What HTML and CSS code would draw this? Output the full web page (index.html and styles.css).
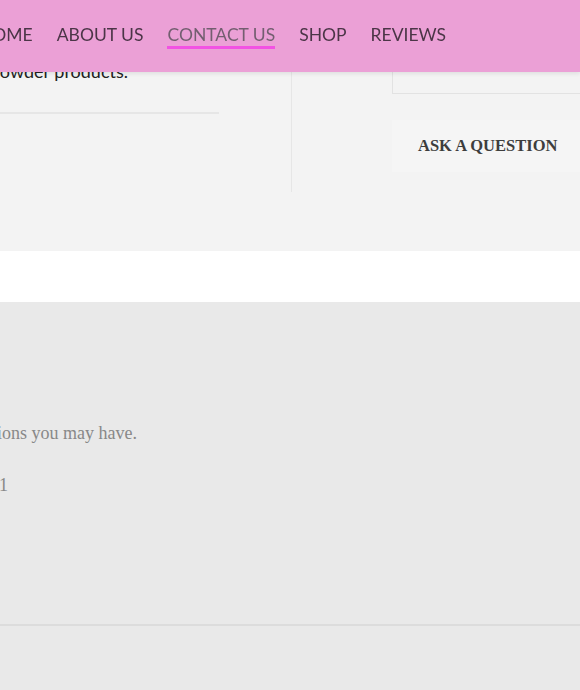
FILE: index.html
```html
<!DOCTYPE html>
<html lang="en">
<head>
    <meta charset="UTF-8">
    <meta name="viewport" content="width=device-width, initial-scale=1.0">
    <title>Contact Us</title>
    <link rel="stylesheet" href="styles.css">
</head>
<body>
    <!-- Barra de navegacion fija -->
    <header class="site-header">
        <ul class="nav">
            <li><a href="#">HOME</a></li>
            <li><a href="#">ABOUT US</a></li>
            <li><a href="#" class="active">CONTACT US</a></li>
            <li><a href="#">SHOP</a></li>
            <li><a href="#">REVIEWS</a></li>
        </ul>
    </header>

    <!-- Seccion de contacto -->
    <section class="contact">
        <div class="contact-grid">
            <div class="contact-info">
                <div class="clip-right intro-wrap">
                    <p class="intro">Get in touch with us about our powder products.</p>
                </div>
                <div class="divider"></div>
            </div>
            <div class="contact-form">
                <div class="field-box"></div>
                <button class="ask-btn">ASK A QUESTION</button>
            </div>
        </div>
    </section>

    <div class="spacer"></div>

    <!-- Pie de pagina -->
    <section class="footer">
        <div class="clip-right note-wrap">
            <p class="note">Feel free to reach out with any questions you may have.</p>
        </div>
        <div class="clip-right phone-wrap">
            <p class="note">Phone: (555) 010-0101</p>
        </div>
        <div class="footer-line"></div>
    </section>
</body>
</html>
```

FILE: styles.css
```css
/* Estilos generales */
body {
    margin: 0;
    padding: 0;
    background-color: #fff;
    color: #333;
    font-family: Lato, "Open Sans", sans-serif;
}

/* Cabecera */
.site-header {
    position: fixed;
    top: 0;
    left: 0;
    right: 0;
    height: 72px;
    background-color: #eba0d6;
    box-shadow: 0 2px 4px rgba(0, 0, 0, 0.08);
    z-index: 10;
}

.nav {
    list-style: none;
    margin: 0 0 0 -21px;
    padding: 25px 0 0;
    display: flex;
    gap: 24px;
}

.nav a {
    display: block;
    padding: 0 0 1px;
    font-size: 17.5px;
    line-height: 20px;
    color: #4b3547;
    text-decoration: none;
    border-bottom: 3px solid transparent;
}

.nav a.active {
    color: #735e70;
    border-bottom-color: #f252e3;
}

/* Recorte hacia la izquierda */
.clip-right {
    display: flex;
    justify-content: flex-end;
    white-space: nowrap;
}

/* Contacto */
.contact {
    background-color: #f3f3f3;
    padding-top: 59px;
    height: 251px;
    box-sizing: border-box;
}

.contact-grid {
    display: grid;
    grid-template-columns: 292px 1fr;
    height: 133px;
}

.contact-info {
    border-right: 1px solid #e6e6e6;
}

.intro-wrap {
    width: 128px;
}

.intro {
    margin: 0;
    font-size: 18px;
    line-height: 24px;
    color: #222;
}

.divider {
    width: 219px;
    margin-top: 29px;
    border-top: 2px solid #e6e6e6;
}

.contact-form {
    padding-left: 100px;
}

.field-box {
    height: 34px;
    border-left: 1px solid #e2e2e2;
    border-bottom: 1px solid #e2e2e2;
}

.ask-btn {
    display: block;
    width: 100%;
    height: 52px;
    margin-top: 26px;
    padding: 0 0 0 26px;
    text-align: left;
    border: none;
    background-color: #f5f5f5;
    font-family: "Liberation Serif", serif;
    font-weight: 700;
    font-size: 16.5px;
    color: #3d3d3d;
}

.spacer {
    height: 51px;
}

/* Pie de pagina */
.footer {
    background-color: #e9e9e9;
    padding-top: 118px;
    height: 388px;
    box-sizing: border-box;
}

.note {
    margin: 0;
    font-family: "Liberation Serif", serif;
    font-size: 18px;
    line-height: 26px;
    color: #888;
}

.note-wrap {
    width: 137px;
}

.phone-wrap {
    width: 8px;
    margin-top: 26px;
}

.footer-line {
    margin-top: 126px;
    border-top: 2px solid #dcdcdc;
}
```
